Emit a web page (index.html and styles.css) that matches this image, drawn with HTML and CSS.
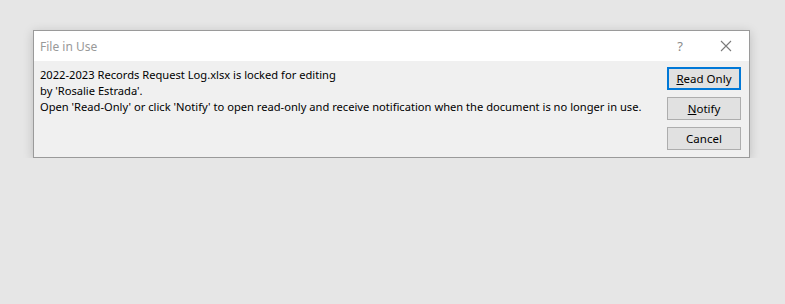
FILE: index.html
```html
<!DOCTYPE html>
<html lang="en">
<head>
    <meta charset="UTF-8">
    <title>File in Use</title>
    <link rel="stylesheet" href="styles.css">
</head>
<body>
    <div class="dialog">
        <div class="title-bar">
            <span class="title">File in Use</span>
            <span class="help">?</span>
            <span class="close">
                <svg width="12" height="12" viewBox="0 0 12 12">
                    <path d="M1 1L11 11M11 1L1 11" stroke="#7a7a7a" stroke-width="1.1" fill="none"/>
                </svg>
            </span>
        </div>
        <div class="content">
            <div class="message">
                <p>2022-2023 Records Request Log.xlsx is locked for editing</p>
                <p>by 'Rosalie Estrada'.</p>
                <p>Open 'Read-Only' or click 'Notify' to open read-only and receive notification when the document is no longer in use.</p>
            </div>
            <div class="buttons">
                <button class="default"><u>R</u>ead Only</button>
                <button><u>N</u>otify</button>
                <button>Cancel</button>
            </div>
        </div>
    </div>
</body>
</html>
```

FILE: styles.css
```css
body {
    margin: 0;
    padding: 30px 0 0 33px;
    background-color: #e6e6e6;
    font-family: "Noto Sans", "Segoe UI", sans-serif;
    font-size: 11.15px;
    color: #000;
}
.dialog {
    width: 715px;
    height: 126px;
    border: 1px solid #9a9a9a;
    background: #f0f0f0;
    box-shadow: 0 2px 10px rgba(0, 0, 0, 0.18);
    display: flex;
    flex-direction: column;
}
.title-bar {
    height: 30px;
    background: #fff;
    display: flex;
    align-items: center;
    padding-left: 6px;
}
.title {
    flex: 1;
    color: #999;
    font-size: 12px;
}
.help {
    color: #8a8a8a;
    font-size: 13px;
    width: 46px;
    text-align: center;
}
.close {
    width: 46px;
    display: flex;
    justify-content: center;
}
.content {
    flex: 1;
    display: flex;
    padding: 6px 8px 0 6px;
}
.message {
    flex: 1;
}
.message p {
    margin: 0;
    line-height: 16px;
}
.buttons {
    display: flex;
    flex-direction: column;
    gap: 7px;
}
button {
    width: 74px;
    height: 23px;
    padding: 0;
    background: #e1e1e1;
    border: 1px solid #adadad;
    font-family: inherit;
    font-size: 11.5px;
    color: #000;
}
button.default {
    border: 2px solid #0078d7;
}
```
